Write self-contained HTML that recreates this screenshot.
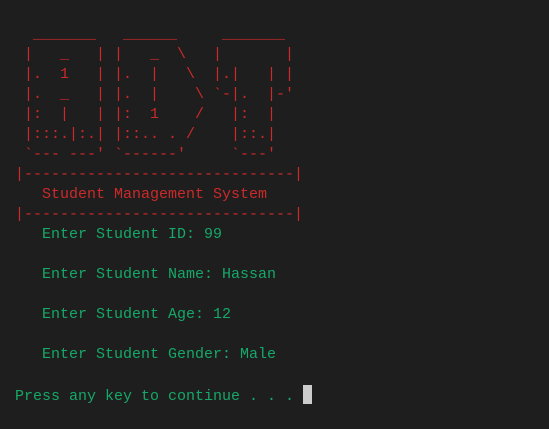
<!DOCTYPE html>
<html><head><style>
html,body{margin:0;padding:0;background:#1e1e1e;width:549px;height:429px;overflow:hidden}
pre{position:absolute;left:15px;top:25px;margin:0;font-family:"Liberation Mono",monospace;font-size:15px;line-height:20px;color:#16a868;letter-spacing:0}
.r{color:#cc2a2a}
.cur{display:inline-block;width:9px;height:19px;background:#cccccc;vertical-align:-4px}
</style></head><body>
<pre><span class="r">  _______   ______     _______
 |   _   | |   _  \   |       |
 |.  1   | |.  |   \  |.|   | |
 |.  _   | |.  |    \ `-|.  |-'
 |:  |   | |:  1    /   |:  |
 |:::.|:.| |::.. . /    |::.|
 `--- ---' `------'     `---'
|------------------------------|
   Student Management System
|------------------------------|</span>
   Enter Student ID: 99

   Enter Student Name: Hassan

   Enter Student Age: 12

   Enter Student Gender: Male

Press any key to continue . . . <span class="cur"></span></pre>
</body></html>
